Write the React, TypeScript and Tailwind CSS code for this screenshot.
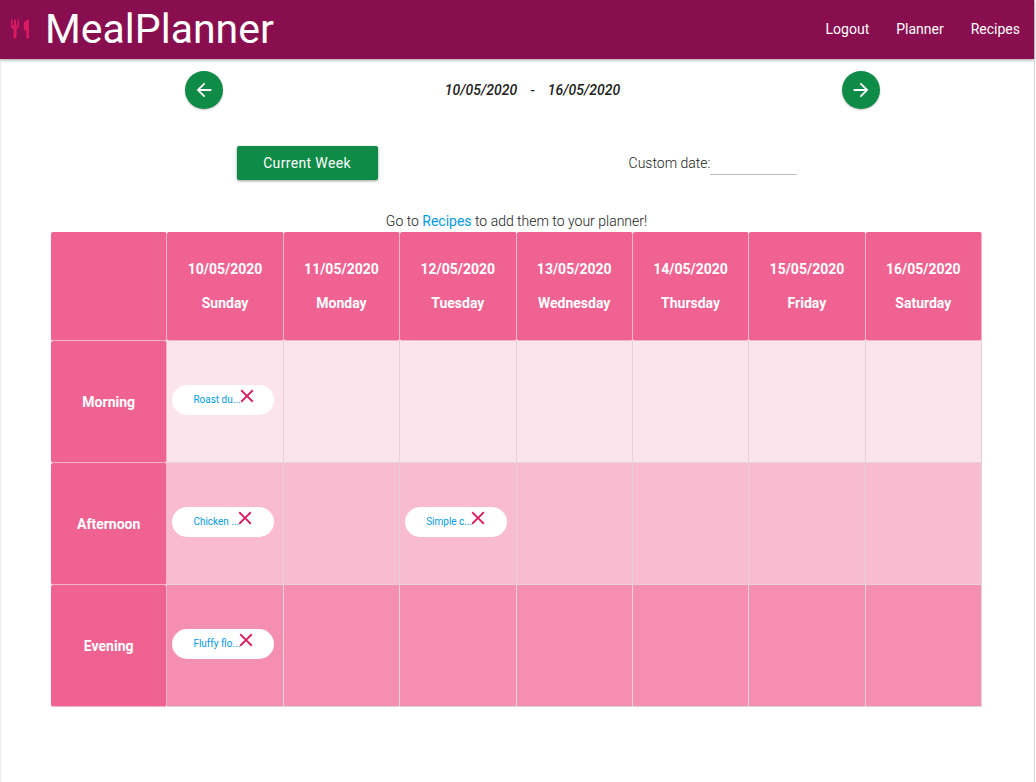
import { MdArrowBack, MdArrowForward, MdClose } from "react-icons/md";

const days = [
  { date: "10/05/2020", name: "Sunday" },
  { date: "11/05/2020", name: "Monday" },
  { date: "12/05/2020", name: "Tuesday" },
  { date: "13/05/2020", name: "Wednesday" },
  { date: "14/05/2020", name: "Thursday" },
  { date: "15/05/2020", name: "Friday" },
  { date: "16/05/2020", name: "Saturday" },
];

const meals: { name: string; cell: string; recipes: Record<string, string> }[] = [
  { name: "Morning", cell: "bg-[#fce4ec]", recipes: { Sunday: "Roast du..." } },
  { name: "Afternoon", cell: "bg-[#f8bbd0]", recipes: { Sunday: "Chicken ...", Tuesday: "Simple c..." } },
  { name: "Evening", cell: "bg-[#f48fb1]", recipes: { Sunday: "Fluffy flo..." } },
];

function Cutlery() {
  return (
    <svg viewBox="0 0 20 20" className="h-5 w-5 fill-[#d81b60]" aria-hidden="true">
      <path d="M1 .5h1.600v6h1.500v-6h1.900v6h1.500v-6H9v6.200c0 1.800-.9 2.700-2.500 3.100V18.500c0 .6-.5 1-1.500 1s-1.500-.4-1.500-1V9.800C1.900 9.400 1 8.500 1 6.700z" />
      <path d="M19 .5v18c0 .6-.5 1-1.300 1s-1.400-.4-1.400-1V11.500h-2.500V6c0-3.200 2-5.500 5.200-5.500z" />
    </svg>
  );
}

function RoundButton({ label, children }: { label: string; children: React.ReactNode }) {
  return (
    <button
      aria-label={label}
      className="flex size-[38px] items-center justify-center rounded-full bg-[#0f8b48] text-[22px] text-white shadow-[0_1px_2px_rgba(0,0,0,0.25)]"
    >
      {children}
    </button>
  );
}

function RecipeChip({ title }: { title: string }) {
  return (
    <div className="mb-1 ml-[5px] flex h-[30px] w-[102px] items-center rounded-full bg-white pt-px pl-[21px] text-[10px]">
      <a href="#recipe" className="whitespace-nowrap text-[#039be5]">{title}</a>
      <button aria-label={`Remove ${title}`} className="mb-2 -ml-[5px] shrink-0 text-[22px] text-[#d81b60]">
        <MdClose />
      </button>
    </div>
  );
}

export default function App() {
  return (
    <div className="mr-px min-h-screen border-r border-l border-r-[#d8d8d8] border-l-[#eeeeee] bg-white font-[Roboto,sans-serif] text-sm text-[#212121]">
      <nav className="-ml-px flex h-[59px] items-center justify-between bg-[#880e4f] pr-[14px] pb-px pl-[10px] text-white shadow-[0_1px_3px_rgba(0,0,0,0.4)]">
        <a href="#home" className="flex items-center gap-[15px]">
          <Cutlery />
          <span className="text-[41px] leading-[58px]">MealPlanner</span>
        </a>
        <div className="flex gap-[27px]">
          <a href="#logout">Logout</a>
          <a href="#planner">Planner</a>
          <a href="#recipes">Recipes</a>
        </div>
      </nav>

      <div className="mt-3 mr-[9px] ml-[39px] grid grid-cols-3 items-center justify-items-center">
        <RoundButton label="Previous week"><MdArrowBack /></RoundButton>
        <p className="flex gap-[13px] font-medium italic">
          <span>10/05/2020</span>
          <span>-</span>
          <span>16/05/2020</span>
        </p>
        <RoundButton label="Next week"><MdArrowForward /></RoundButton>
      </div>

      <div className="mt-[37px] mr-[118px] ml-[103px] grid grid-cols-2 items-center justify-items-center">
        <button className="h-[34px] w-[141px] rounded-xs bg-[#0f8b48] text-sm tracking-wide text-white shadow-[0_1px_3px_rgba(0,0,0,0.4)]">
          Current Week
        </button>
        <div className="flex items-center font-light">
          <label htmlFor="custom-date">Custom date:</label>
          <input id="custom-date" type="text" className="h-6 w-[87px] border-b border-[#bdbdbd] outline-none" />
        </div>
      </div>

      <main className="mt-[31px] mr-[52px] ml-[50px]">
        <p className="text-center font-light">
          Go to <a href="#recipes" className="font-normal text-[#039be5]">Recipes</a> to add them to your planner!
        </p>
        <table className="mt-px w-full table-fixed border-separate border-spacing-0 font-bold">
          <thead>
            <tr className="h-[109px] text-white">
              <td className="rounded-xs border-r border-b border-[#f3b4ca] bg-[#f06292]" />
              {days.map((day) => (
                <th key={day.name} scope="col" className="rounded-xs border-r border-b border-[#f3b4ca] bg-[#f06292] p-0">
                  <p className="leading-[34px]">{day.date}</p>
                  <p className="leading-[34px]">{day.name}</p>
                </th>
              ))}
            </tr>
          </thead>
          <tbody>
            {meals.map((meal) => (
              <tr key={meal.name} className="h-[122px]">
                <th scope="row" className="rounded-xs border-r border-b border-[#f3b4ca] bg-[#f06292] p-0 text-white">
                  {meal.name}
                </th>
                {days.map((day) => (
                  <td key={day.name} className={`border-r border-b border-[#e5d1dc] p-0 font-normal ${meal.cell}`}>
                    {meal.recipes[day.name] && <RecipeChip title={meal.recipes[day.name]} />}
                  </td>
                ))}
              </tr>
            ))}
          </tbody>
        </table>
      </main>
    </div>
  );
}
